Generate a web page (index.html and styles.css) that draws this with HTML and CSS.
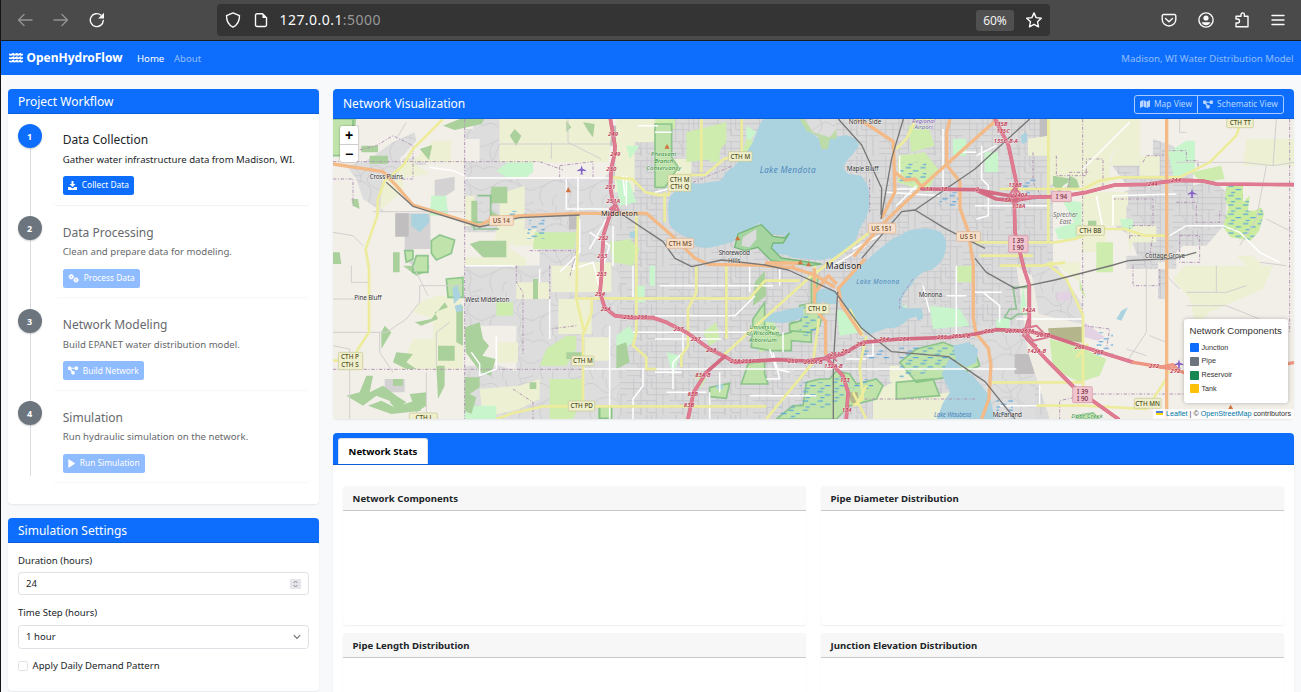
FILE: index.html
```html
<!DOCTYPE html>
<html lang="en">
<head>
<meta charset="utf-8">
<title>OpenHydroFlow</title>
<link rel="stylesheet" href="styles.css">
</head>
<body>
<svg class="defs" width="0" height="0">
  <symbol id="i-nodes" viewBox="0 0 576 512"><path d="M0 80c0-26 22-48 48-48h96c26 0 48 22 48 48v16h192V80c0-26 22-48 48-48h96c26 0 48 22 48 48v96c0 26-22 48-48 48h-96c-26 0-48-22-48-48v-16H192v16l-1 7 73 105h72c26 0 48 22 48 48v96c0 26-22 48-48 48h-96c-26 0-48-22-48-48v-96l1-7-73-105H48c-26 0-48-22-48-48z"/></symbol>
</svg>
<header class="chrome">
  <div class="chrome-nav">
    <svg width="16" height="16" viewBox="0 0 16 16" class="dim"><path d="M15 8H1.500M7 2.500L1.500 8 7 13.500"/></svg>
    <svg width="16" height="16" viewBox="0 0 16 16" class="dim"><path d="M1 8h13.500M9 2.500L14.500 8 9 13.500"/></svg>
    <svg width="16" height="16" viewBox="0 0 16 16"><path d="M14.300 8.500A6.500 6.500 0 1 1 11.800 3"/><path class="solid" d="M15 .8v5.800H9.200z"/></svg>
  </div>
  <div class="urlbar">
    <svg width="16" height="16" viewBox="0 0 16 16"><path d="M8 .9L14.500 3.600C14.500 9 13 13 8 15.200 3 13 1.500 9 1.500 3.600z"/></svg>
    <svg width="14" height="16" viewBox="0 0 14 16"><path d="M3 1.700h5.500l4 4V13a1.500 1.500 0 0 1-1.500 1.500H3A1.500 1.500 0 0 1 1.500 13V3.200A1.500 1.500 0 0 1 3 1.700z"/><path class="solid" d="M8.500 2v4h4z"/></svg>
    <span class="url">127.0.0.1<i>:5000</i></span>
    <span class="zoom">60%</span>
    <svg width="16" height="16" viewBox="0 0 16 16"><path d="M8 .9l2.100 4.700 5.200.6-3.800 3.500 1 5.100L8 12.300l-4.500 2.500 1-5.100L.7 6.200l5.200-.6z"/></svg>
  </div>
  <div class="chrome-tools">
    <svg width="16" height="16" viewBox="0 0 16 16"><path d="M2.500 2.500h11a1.300 1.300 0 0 1 1.300 1.300V7.500a6.800 6.500 0 0 1-13.600 0V3.800a1.300 1.300 0 0 1 1.300-1.300zM4.500 6.500L8 9.800l3.500-3.300"/></svg>
    <svg width="16" height="16" viewBox="0 0 16 16"><circle cx="8" cy="8" r="7.100"/><circle class="solid" cx="8" cy="6" r="2.600"/><path class="solid" d="M3.500 10.300h9c-1 2-2.500 3-4.500 3s-3.500-1-4.500-3z"/></svg>
    <svg width="16" height="16" viewBox="0 0 16 16"><path d="M2 14.800V11h1.500a2 2 0 0 0 0-4H2V4.300h5V2.600a1.700 1.700 0 0 1 3.400 0v1.700H14v10.500z"/></svg>
    <svg width="14" height="16" viewBox="0 0 14 16"><path d="M1 3.500h12M1 8h12M1 12.500h12"/></svg>
  </div>
</header>
<nav class="navbar">
  <svg class="brand-icon" width="14" height="10" viewBox="0 0 14 10"><path d="M0 1.300q1.750 1.200 3.500 0t0 0q1.750 1.200 3.500 0t0 0q1.750 1.200 3.500 0t0 0q1.750 1.200 3.500 0M0 4.700q1.750 1.200 3.500 0t0 0q1.750 1.200 3.500 0t0 0q1.750 1.200 3.500 0t0 0q1.750 1.200 3.500 0M0 8.100q1.750 1.200 3.500 0t0 0q1.750 1.200 3.500 0t0 0q1.750 1.200 3.500 0t0 0q1.750 1.200 3.500 0"/></svg>
  <span class="brand">OpenHydroFlow</span>
  <a class="nav-link active">Home</a><a class="nav-link">About</a>
  <span class="nav-text">Madison, WI Water Distribution Model</span>
</nav>
<main class="layout">
  <aside class="sidebar">
    <section class="card workflow">
      <h5 class="card-header">Project Workflow</h5>
      <ol class="steps">
        <li class="step on"><b class="num">1</b><div class="step-card"><h5>Data Collection</h5><p>Gather water infrastructure data from Madison, WI.</p><button class="btn"><svg width="9" height="9" viewBox="0 0 18 18"><path d="M7 0h4v6h4l-6 6-6-6h4zM0 12h5l4 3 4-3h5v6H0z"/></svg>Collect Data</button></div></li>
        <li class="step"><b class="num">2</b><div class="step-card"><h5>Data Processing</h5><p>Clean and prepare data for modeling.</p><button class="btn"><svg width="11" height="9" viewBox="0 0 22 18"><g class="gear"><circle cx="6.500" cy="5.500" r="3"/><circle cx="16" cy="12" r="3"/></g><g class="teeth"><circle cx="6.500" cy="5.500" r="4.600"/><circle cx="16" cy="12" r="4.600"/></g></svg>Process Data</button></div></li>
        <li class="step"><b class="num">3</b><div class="step-card"><h5>Network Modeling</h5><p>Build EPANET water distribution model.</p><button class="btn"><svg width="10" height="9"><use href="#i-nodes"/></svg>Build Network</button></div></li>
        <li class="step"><b class="num">4</b><div class="step-card"><h5>Simulation</h5><p>Run hydraulic simulation on the network.</p><button class="btn"><svg width="7" height="9" viewBox="0 0 7 9"><path d="M.3 1Q.3 0 1.200.5L6.500 4q.6.500 0 1L1.200 8.500Q.3 9 .3 8z"/></svg>Run Simulation</button></div></li>
      </ol>
    </section>
    <section class="card settings">
      <h5 class="card-header">Simulation Settings</h5>
      <div class="form">
        <label>Duration (hours)</label>
        <div class="control"><span>24</span><svg class="spin" width="11" height="10" viewBox="0 0 11 10"><path d="M3.500 4l2-2 2 2M3.500 6l2 2 2-2"/></svg></div>
        <label>Time Step (hours)</label>
        <div class="control select"><span>1 hour</span><svg width="8" height="8" viewBox="0 0 8 8"><path d="M.8 2.200L4 5.500l3.200-3.300"/></svg></div>
        <div class="check"><i></i>Apply Daily Demand Pattern</div>
      </div>
    </section>
  </aside>
  <div class="content">
    <section class="card viz">
      <div class="card-header viz-header"><h5>Network Visualization</h5>
        <div class="group"><span><svg width="10" height="8" viewBox="0 0 20 16"><path d="M0 3l6-3v13l-6 3zM7 0l6 3v13l-6-3zM14 3l6-3v13l-6 3z"/></svg>Map View</span><span><svg width="10" height="9"><use href="#i-nodes"/></svg>Schematic View</span></div>
      </div>
      <div class="map">
        <svg class="tiles" viewBox="0 0 2883 900">
          <defs>
            <pattern id="st" width="126" height="111" patternUnits="userSpaceOnUse">
              <rect width="126" height="111" fill="#dadadb"/>
              <path d="M0 14h126M0 32h60v18h66M0 68h88v20H0M20 0v68M42 14v97M60 0v50M88 0v111M108 50v61M0 104h42M74 0v32h52M28 68q16 18 14 43M60 68v36h28" fill="none" stroke="#c7c7c9" stroke-width="2.500"/>
            </pattern>
            <pattern id="cur" width="150" height="130" patternUnits="userSpaceOnUse">
              <rect width="150" height="130" fill="#dddddd"/>
              <path d="M0 20q30-18 50 8t48-2 52-6M30 130q-22-40 6-62t58-8 16 48 40 12M0 84q24-12 36-16M70 0q-4 20 8 32t2 30M110 0q14 22-2 40t16 36 26-2M60 130q-6-24 12-32" fill="none" stroke="#cacacd" stroke-width="2.500"/>
            </pattern>
            <pattern id="wet" width="44" height="28" patternUnits="userSpaceOnUse">
              <path d="M2 6h16M24 16h16M10 24h12" stroke="#5aa6dc" stroke-width="3.500"/>
            </pattern>
          </defs>
          <rect width="2883" height="900" fill="#f2efe9"/>

          <!-- built-up areas -->
          <g fill="url(#st)">
            <path d="M1190 0H2160V900H690V640L640 470 690 300 830 160 850 40 1000 0z"/>
            <path d="M2330 130l60-10h70V60l60 20 60 60v60l60-20 40 40v90l-60 70h-70l-50 50h-80l-30-80-60-40-10-60 70-40z"/>
            <path d="M2380 410h150v40h-150zM2505 490v-80h-30v130h30z"/>
          </g>
          <g fill="url(#cur)">
            <path d="M40 140L100 125 180 70 245 40 250 65 200 120 215 160 150 175 150 280 90 240 70 180zM395 128H520V180H850V620H395V440H620V340H395zM420 0H500V130H440V60H395V30H420z"/>
            <path d="M395 740H500L620 780V900H395zM550 440H860V900H620L550 780z"/>
            <path d="M1926 620h180v280H1926zM210 118h70v20h-70zM700 440l130-20v300H700z"/>
          </g>
          <path d="M187 283H292V390H240V440L215 420V350H187zM305 183l60-10v40l-60 40zM155 780h60v40h-60z" fill="#d4d2d2"/>
          <path d="M187 283h40v70h-40zM708 283h28v48h-28zM820 20h38v60h-30zM2045 705h60v60h-60zM2120 0h30v70h-30z" fill="#c0bebe"/>

          <!-- farmland -->
          <g fill="#edf0d3">
            <path d="M150 190L190 170 215 125H240l60-60h55v60h40v5H240l50 35-80 10v40l-70 60zM500 0H840L825 130H500zM395 230h30v90h-30zM500 225l75-25v90l-75 40zM540 330h70v50h-70z"/>
            <path d="M500 285h75v40l-50 60 55 35v20H395v-25h80zM310 530h75v130H300V600l-60-20 20-30zM240 660h150v90H200z"/>
            <path d="M550 490h100v50H550zM655 440h100v80H655zM676 540h100v105H676zM495 670h60v60h-60zM440 810l120-10 60-20 0 60-60 30-110 25zM755 655h75v70h-75zM735 430h100v90H735z"/>
            <path d="M850 0h115v70h-60v150h-60zM965 120h110v60H965zM1620 820l80-40 80 10v40l70-10v80h-230zM1670 740h70v50h-70z"/>
            <path d="M2085 60l60-10V0h200L2330 130v60l-60 30-60-50-60 30V110h-65zM2330 0h40v40l-40 80zM2370 0h50v140h-90l20-60zM2245 220H2385V260H2320V400h-75zM2320 260h60v60h-60zM2740 60h143v80H2730z"/>
            <path d="M2555 440h265l-30 70-160 70-40 40-20-80-50-60zM2420 110h60v60h-60zM2160 430h80v60z"/>
            <path d="M2380 320h90v50h-70l-10 30zM2710 410h50l30 30-40 10z"/>
          </g>
          <path d="M2050 440L2240 560V900H2150L2085 700z" fill="#efece4"/>
          <path d="M2092 440l80 0 75 115v60l-130-30z" fill="url(#cur)"/>

          <!-- parks and grass -->
          <g fill="#c8f5cc">
            <path d="M525 130h75v30l-20 15h-60l-30-20zM295 230h45l5 60h-55zM850 180l40 10 20 60-50 10zM2505 100l55-35 26 0v90l-60 30-8-30zM2185 240l60 10v110h-70l-10-30 60-20zM1790 560l90 10 30 50-110 10zM1860 60h40v50h-40zM880 80h40l-30 40zM905 500h30v50h-30zM395 860h95v40h-95zM2360 300h40v30h-30z"/>
            <path d="M1240 20l30 20-30 40zM1510 570l60 20 20 50-70 10zM950 440h16v60h-16zM1955 100h40v60h-40zM1990 600h40v40h-40zM2070 500l10 60-20 20zM1000 700l40 10-20 60zM850 650l40-30 20 40-60 50zM1700 560h20v20h-20z"/>
          </g>
          <g fill="#cdecae">
            <path d="M605 340h125l-5 50H600zM830 370l60-10 30 30-20 50-60-10zM490 550h50v40h-50zM640 690l60-40h30v40l-30 50h-80zM650 780h100v60l-30 60H650zM1060 40l120-30 0 60-40 50-80 10zM1695 110l80-10 40 50-30 70-90-30zM1725 20h60l20 60-70 20zM2575 160l90-20 10 40-70 10zM2150 660l80 20 90 40 -20 50-60 20-80-40zM2290 370h50v90h-50zM1270 640l40-50 30 50v40l-60 20zM1110 640l40-30 10 50-30 20zM2240 510v-30l20 60z"/>
            <path d="M966 0h60v30h-60zM1240 60l50 10-30 60h-40zM1120 40l40 10v80h-30zM1870 440h50v50h-50zM1090 760l30 20-20 30zM1420 230v-10z"/>
          </g>
          <g fill="#aad09c">
            <path d="M0 0h70l-15 100H10V30H0zM85 80h50v20H85zM110 110h55v24h-55zM260 90l38-12-10 45zM330 20l50-20h75l-10 15-80 18zM475 203h48v50h-50zM415 245h18v80h-18zM475 275l30 20v25h-40zM180 400h20v60h-20zM480 365h40v50h-70l-40-40 30-10zM700 5l15 20-15 15zM750 10l35 5-5 40-15-20zM0 400h20l5 35H0zM545 30l20 20-15 30-20-30zM210 440h80l-10 20-30 10zM55 240l20 0 5 30-20-10z"/>
            <path d="M395 625l45-15 10 50 18 20-20 30 40 10-15 50-30-10-45-60zM245 610l50-10 40-50 10 15-40 15 10 20-50 20zM310 740h25v60l-20 40zM315 680h50v45h-50zM40 830l40-10 20-50 20 0-10 50 40-20 40 30-10 20-50-20-40 30zM105 860l40-15 40 20 60-20 20 30-90 10zM190 700l50 5-20 25 30 20h-30l-40-20zM230 825l50-5 0 40-30 20zM180 780h30v20h-30zM145 640l10-20 20 20-30 50zM370 560h20v120l-20-10zM170 850l20-20 30 20-30 20z"/>
            <path d="M395 775h45v30l-30 20 20 10-15 50-20-10zM795 862h42v38h-42zM700 700h50v20h-50zM590 790h20v20h-20zM600 480h15v60h-15zM850 680l30-10 10 60-40 20z"/>
            <path d="M2160 170l60 10-30 20-10 20-20-20zM2210 170l20 10 10 25-40 10zM2265 305h25v20h-25zM1265 490l30-35 5 75-40 30z"/>
          </g>
          <!-- nature reserves -->
          <g class="reserve">
            <path class="open" d="M433 230h40v80h-50v20h75"/>
            <path d="M295 365l25-17 45 15-10 40-45 20-15-20zM215 395h25l0 25-20 10zM250 410h35v50h-45v-20z"/>
            <path d="M340 480l50-5v60h-45zM0 0h60v110H0M966 15h50v100l20 30-40 60-30 0z"/>
            <path d="M1260 600l35-50 0 80 40 20 40-10v-30l60 0v60l-60-5v30h-60l-60-10z"/>
            <path d="M1400 560l50-10 5-80-20 0v80l40 10-15 60-30 20-60-5v-20l35-10z"/>
            <path d="M1245 735l50-10v40l10 30h-80l10-30z"/><path d="M1130 805l60-12-10 45-50-5z"/>
            <path d="M1420 790l40-10h30l20-25 40 10 20 30 60-15 20 20-20 40-80 20-40 40h-180l50-40 30 0z"/>
            <path d="M1700 730l50-40 80-20 50 20 40-10 20 60-70 30-120 20zM1690 790l110-10 20 50-130 10z"/>
            <path class="open" d="M2040 505h45v80h-30l-20 15-20-5 15-25h20z"/>
            <path d="M1225 900l0 0zM800 862h36v36h-36zM2230 890l50-8 20 18h-70z"/>
          </g>
          <g fill="url(#wet)">
            <path d="M1400 550h60v100h-60zM1400 790h80l40-30 40 40-60 60-100 20zM1700 680l220 0 0 50-220 50zM1580 690h90v30h-90zM2050 190l60-20v80zM590 300h45v60h-55zM520 275h60v24h-60zM1340 860h60v40h-60zM1560 780h60v30h-60z"/>
            <path d="M1700 130h80v60h-80zM1820 220h60v40h-60zM1990 840h50v60h-50zM2290 640h50v70h-50zM2540 50"/>
          </g>
          <g fill="#cbec9f"><path d="M2680 200h50v50l20-20-5 45h20l20-10 8 20-15 50-25 30-60-10-22-30 15-60-10-25z"/></g>
          <path d="M2680 200h50v50l20-20-5 45h20l20-10 8 20-15 50-25 30-60-10-22-30 15-60-10-25z" fill="url(#wet)"/>
          <path d="M2145 628l102-5v48l-97-15zM1545 820h30v40l-20-10z" fill="#b5b58c"/>
          <path d="M2255 610l60 45-20 10-40-10zM2172 520h40v25h-40z" fill="#e3d2e4"/>

          <!-- lakes -->
          <g fill="#aad3df">
            <path d="M1291 0C1272 24 1270 55 1252 82 1240 105 1222 112 1215 130 1205 142 1195 148 1185 155 1165 172 1175 185 1150 187 1120 190 1090 200 1072 190 1050 196 1030 210 1012 232 1002 250 1006 290 1008 312 1020 345 1070 350 1085 378 1110 396 1160 380 1200 368L1240 335 1280 312 1310 345 1350 348 1365 332 1350 352 1320 365 1310 385 1325 403 1360 408 1380 416 1430 420 1460 424 1500 416 1535 395 1565 370 1580 330 1600 295 1610 260 1608 215 1602 195 1585 170 1545 165 1530 145 1545 120 1560 105 1578 80 1570 60 1540 48 1500 55 1460 60 1440 45 1425 0z"/>
            <path d="M1596 428C1640 390 1680 352 1706 348 1730 325 1800 322 1826 343 1842 360 1842 380 1836 400 1830 430 1810 440 1796 453 1770 455 1750 470 1736 498 1715 520 1702 540 1706 560 1725 575 1745 565 1766 568L1771 598 1755 605 1750 592 1726 600C1700 625 1690 628 1660 628L1606 648C1580 620 1550 590 1536 568L1518 518C1525 490 1535 475 1556 458z"/>
            <path d="M1450 515q40-15 60 5l0 35-30 0-10-10-20 25zM1290 610l20-25 60-15 30-5 10-2 2 30-20 10-40 10-60-5-15 10z"/>
            <path d="M1860 680l45-10 30 20-5 40-30 15-30-20zM1850 715l40 35 30 20 50 60 16 70h-175l20-50 20-30-25-55z"/>
            <path d="M235 285l50 0 5 25-30 30-25-20zM358 510l15-15 10 40-20 20zM365 560l20-5 5 20-20 5zM890 340l25-5 0 25-25-5zM2350 600l15-25 20-10-20 40zM2062 50l20-10v30l-15 5zM1150 800l20-5v15h-20zM1926 800q20 30 14 80l-14 20z"/>
          </g>
          <path d="M1400 0h110l0 60-20 0-5 30-20 0-10-40-35-15z" fill="#bddba9"/><path d="M1415 0h95v30l-20 25-50-15z" fill="url(#cur)"/>
          <path class="shore" d="M1205 385l10-40 60-25 10-3 35 35 35 5 15-15-20 30-30 0-5 15 30 30 120 18-30 5-120-15-40-40-40 10z"/>
          <path d="M1230 355l40-25v30l-20 25-25-5z" fill="#dbdbdb"/>

          <!-- administrative limits -->
          <g class="limit">
            <path d="M395 0V900M0 128H620l70 25M0 751H960M70 130v-35l60-15 50-30 60 30v100H150M680 140l100-12v50h-100zM550 440v50l20 30v190M650 440v190l80-10M0 180h60v80M1322 0M2249 0V640M2170 110v60h90v-50h50v90M2340 240h120v80h-70v40M2430 130l10-20h50v-15h70v30h35v30M2530 250h60v60h70v-40M2540 350h60v80h-60zM2390 350h70l-10 60M2870 0V640M2100 100v90l30 50 80-40v-40h60M2750 825h-180l-50 0h-250l-90 20v60M1926 840h-350M1610 180v100M1740 480l-40 60 0 30M1080 190l120-50M2250 620l80 10-10 60M2400 440v60h80v-50M540 810l60 40v50M590 395h140l-20 80"/>
          </g>
          <!-- local roads -->
          <g class="minor">
            <path d="M395 177H835M440 770l50-20V650M395 440h150M290 145l70 10 36 15M440 770v-35l-25-35M735 177v100M620 490v-40M650 540v120M830 620V900M900 440v100h60M750 750H2050M966 220l40-10M966 40h50M980 500h340M900 640h360M1250 440v80M1320 700l20 80M1340 780l-40 0M1660 220l160 10M1680 210h110M1830 30v180M1880 100h50M1926 260h220M1946 80v100l20 20v90l-36 10M1926 520h80M2000 610v-50l-50-40M2250 150l140-140M2050 600h200M2000 860h120v-60M2340 320v-90l190-5M2290 230l20 100M2510 350l50-30h110l50 20 60 60 60 30M820 300l-50 90M840 320v120M910 280v300M700 180v90h130M880 170v90M870 170l5 60M915 20h60M740 390l-20 60 60-20 20 80"/>
            <path d="M740 300v100l-60 60M770 340l60 40-20 60M966 660h200M1000 820h120M1160 760v60M1050 640v60l-30 30v80M1770 500l20 80M1870 440v220M1840 530h60M1990 80l-60 30M1700 170v-60M1690 260l60-60M1640 350l-80 40M1600 380l-100 60M1310 690l20 60 40 10M966 590h240l60-60M1180 440v100h-60M1350 640v60M900 900v-60l30-40v-50M966 760h80M1130 900v-80M1340 440v60M1540 720h60M1620 650v60h-20M1250 830h200"/>
          </g>
          <g class="track">
            <path d="M0 340l60 10 30 30M55 440v50h50M240 440l45 90M190 60l30-50M655 70v50M500 75h340M705 0v70l100 50M500 75l-20 50M310 640v100M0 640h160l60-40 40-50v-50M260 500h130M0 540h120M120 278h270M310 640l40-30M0 680l50 10M50 690v210M50 750h10M140 640v60l40 60M280 760v140M2560 40h-20v-40M2530 130h200l90 10 10-140M2820 140l63-10M2800 140l-30 160-50 80M2800 300l80 40M2440 440v200l-60 90M2450 650l50 20v100M2560 560h120l100 40M2480 450l60 60M2650 440v80M2560 520l120 0 60-20M2780 430l80 10M2380 690l60 20"/>
          </g>
          <!-- secondary roads -->
          <g>
            <path class="sec" d="M330 0L240 90 210 140 155 185 135 240 133 290 98 390 108 450V640L75 690 60 725H0M735 290l-5 250 24 100 22-60V540M750 640V862l-120 0-90 20-50 18M750 862h230l320 0M838 175l60 5 40 40 50 10M966 228h40l20-60h90l60-50h30M1105 0v160M1226 0v110M725 538H1250L1296 485H1400M995 220v90M910 290V640l-10 40 40 35v35h30M1090 440v80l-25 50v110l-20 30 0 35M1180 440v220M1446 440v40M1170 710l260-235 200-150M1300 900l140-170 18-130M1560 860l30-20-10-100 20-90M1590 650l-40-80M1570 860l30-60 0 0M1560 820l40 80M1800 0h-50l-30 60-30 30 0 0"/>
            <path class="sec" d="M2000 210h250l50-25 60-10h180l90-45 80-80 20-60M2146 0v370M1926 370h240l60-10 70-30h80l60 20h70M2000 440h130l30-10M2126 440l70-10M2150 440l50 40 50 110V850M1970 790h276M2110 860h80l60 0 190 10 60-90v-20h10M2230 715l35-40M1940 410h160"/>
          </g>
          <!-- trunk and primary roads -->
          <g class="pri">
            <path d="M0 135L150 158 190 200 240 258 440 320 480 298 560 291 740 283H940L1026 358 1086 418 1126 436 1266 438 1376 446 1446 468 1506 505"/>
            <path d="M1561 413L1666 298 1766 203 1956 33 1995 0M1566 0L1606 18 1681 68 1686 218 1646 298M1686 160L1716 183 1746 180 1766 203M1851 0L1841 40V138L1881 188V268L1906 338 1921 438V598L1931 653M1926 638L1966 688 1974 738 1968 838 1946 900M1444 448V568L1478 608V708M1596 420L1516 508 1526 558 1586 648M2501 0V900M1446 520l40-50 25 25M1380 438v10M1296 432h100"/>
          </g>
          <!-- railways -->
          <path class="rail" d="M160 190L240 262 440 324 560 296 740 288M870 288L990 368 1026 418 1076 443 1166 423 1296 438 1366 453 1506 518 1586 628 1676 698 1846 713 1956 788 2046 900M1516 0L1586 78 1646 208 1644 288M1711 0L1676 118 1644 300M1586 418L1706 278 1746 273 1836 328 1956 388M1746 273L1926 150 2090 0M1514 518L1501 738V900M1926 418L1960 460 2046 508 2166 483 2341 438 2386 425 2526 418 2590 400"/>
          <!-- freeways -->
          <g fill="none" stroke-linecap="round" stroke-linejoin="round">
            <path id="belt" class="mw-case" d="M832 0L846 80 845 105 835 145 832 205 838 240 848 260 830 290 812 345 808 405 806 465 801 520 815 565 845 590 890 596H960L1000 610 1060 640 1130 690 1175 712 1205 730 1330 722 1420 726 1480 718 1530 705 1590 670 1700 660 1850 655 1926 645 1990 632 2080 636 2150 650 2240 680 2320 705 2400 730"/>
            <path class="mw" d="M832 0L846 80 845 105 835 145 832 205 838 240 848 260 830 290 812 345 808 405 806 465 801 520 815 565 845 590 890 596H960L1000 610 1060 640 1130 690 1175 712 1205 730"/>
            <path class="mw-case" d="M1175 712L1120 760 1082 820 1065 900M1480 718L1530 770 1545 820 1540 900M1986 0L2026 78 2050 190 2044 250 2046 340 2074 453 2089 498V618L2081 658 2146 728 2226 808 2356 900"/>
            <path class="mw" d="M1120 760L1082 820 1065 900M1480 718L1530 770 1545 820 1540 900M1986 0L2026 78 2050 190 2044 250 2046 340 2074 453 2089 498V618L2081 658 2146 728 2226 808 2356 900"/>
            <path class="mw-case" d="M1766 210L1926 212 2000 225 2060 235 2180 233 2260 220 2345 198 2440 196 2500 188 2550 184 2610 186 2650 195 2883 197M1926 212L1990 240 2040 245 2100 235"/>
            <path class="mw" d="M2060 235L2180 233 2260 220 2345 198 2440 196 2500 188 2550 184 2610 186 2650 195 2883 197"/>
            <path d="M2070 630l40-10 35 35-45 10zM2025 235l20-30 25 30-25 20zM830 270l18-15 10 20zM2085 600l-15 50 40 30M1460 725l30-20 20 20" stroke="#d8788e" stroke-width="6"/>
            <path d="M2240 680L2320 705 2400 730" class="mw"/>
            <path d="M2400 730L2450 738 2520 750 2600 775M2480 745l40-8 20 20M2840 738l43-7" stroke="#ee9682" stroke-width="10"/>
          </g>

          <!-- place names -->
          <g class="place">
            <text x="160" y="180" textLength="100">Cross Plains</text>
            <text x="859" y="292" class="town" textLength="110">Middleton</text>
            <text x="105" y="544" textLength="82">Pine Bluff</text>
            <text x="463" y="548" textLength="132">West Middleton</text>
            <text x="1596" y="15" textLength="98">North Side</text>
            <text x="1589" y="157" textLength="96">Maple Bluff</text>
            <text x="1204" y="409" textLength="94">Shorewood</text><text x="1204" y="432">Hills</text>
            <text x="1532" y="449" class="city" textLength="108">Madison</text>
            <text x="1792" y="534" textLength="70">Monona</text>
            <text x="2496" y="418" textLength="120">Cottage Grove</text>
            <text x="2023" y="894" textLength="88">McFarland</text>
            <text x="2197" y="293" class="soft">Sprecher</text><text x="2197" y="315" class="soft">East</text>
            <g class="lake"><text x="1364" y="163" class="big" textLength="168">Lake Mendota</text><text x="1634" y="495" textLength="128">Lake Monona</text><text x="1859" y="893" textLength="112">Lake Waubesa</text></g>
            <g class="nature"><text x="992" y="112" textLength="76">Pheasant</text><text x="992" y="133">Branch</text><text x="992" y="154" textLength="104">Conservancy</text><text x="1289" y="629">University</text><text x="1289" y="649" textLength="98">of Wisconsin</text><text x="1289" y="670" textLength="84">Arboretum</text><text x="2262" y="896" textLength="94">Door Creek</text></g>
            <g class="air"><text x="1772" y="12">Regional</text><text x="1772" y="31">Airport</text></g>
          </g>
          <g class="exits">
            <text x="840" y="51">249</text><text x="847" y="111">249</text><text x="835" y="157">250</text><text x="832" y="211">251</text><text x="841" y="251">251A</text><text x="811" y="362">252</text><text x="808" y="417">253</text><text x="806" y="470">253</text><text x="801" y="531">254</text><text x="818" y="575">254</text><text x="886" y="601">255</text><text x="928" y="601">256</text>
            <text x="1037" y="635">257</text><text x="1088" y="667">257</text><text x="1135" y="698">258</text><text x="1207" y="731">258</text><text x="1246" y="731">258A</text><text x="1380" y="732">259</text><text x="1441" y="734">260A·B</text><text x="1506" y="712">261</text><text x="1539" y="702">262</text><text x="1584" y="682">262</text><text x="1653" y="667">264</text><text x="1714" y="667">264</text><text x="1827" y="661">265</text><text x="1884" y="658">265A·B</text><text x="1968" y="642">266</text><text x="2038" y="642">267A</text><text x="2084" y="642">267A</text><text x="2131" y="653">267B</text><text x="2240" y="690">269</text><text x="2297" y="706">269</text><text x="2463" y="748">272</text><text x="2527" y="762">272</text>
            <text x="1110" y="774">83A·B</text><text x="1079" y="830">83B</text><text x="1068" y="865">83B</text><text x="1501" y="746">132A·B</text><text x="1535" y="790">133</text><text x="1541" y="880">134</text><text x="2087" y="580">142A</text><text x="2111" y="702">142A-B</text>
            <text x="2003" y="20">135B</text><text x="2010" y="43">135C</text><text x="2018" y="72">135C-B·A</text><text x="2046" y="203">138B</text><text x="2064" y="235">240A</text><text x="2024" y="250">3A</text><text x="2057" y="268">138A</text><text x="1788" y="215">1A</text><text x="1833" y="215">1B</text><text x="1933" y="217">2</text><text x="2459" y="200">244</text><text x="2529" y="188">244</text>
          </g>
          <!-- route shields -->
          <g class="shield or"><rect x="469" y="290" width="72" height="29"/><text x="505" y="312">US 14</text><rect x="1606" y="313" width="82" height="30"/><text x="1646" y="335">US 151</text><rect x="1871" y="338" width="71" height="29"/><text x="1906" y="360">US 51</text><rect x="1001" y="358" width="81" height="30"/><text x="1041" y="380">CTH MS</text></g>
          <g class="shield ye"><rect x="1186" y="98" width="71" height="29"/><text x="1222" y="120">CTH M</text><rect x="1005" y="167" width="69" height="50"/><text x="1040" y="189">CTH M</text><text x="1040" y="211">CTH Q</text><rect x="716" y="711" width="67" height="29"/><text x="750" y="733">CTH M</text><rect x="706" y="846" width="79" height="30"/><text x="746" y="868">CTH PD</text><rect x="16" y="700" width="73" height="52"/><text x="51" y="721">CTH P</text><text x="51" y="743">CTH S</text><rect x="1418" y="554" width="70" height="30"/><text x="1453" y="577">CTH D</text><rect x="2681" y="-4" width="80" height="30"/><text x="2722" y="18">CTH TT</text><rect x="2230" y="320" width="84" height="29"/><text x="2272" y="342">CTH BB</text><rect x="2404" y="838" width="80" height="30"/><text x="2444" y="861">CTH MN</text><rect x="229" y="882" width="84" height="30"/><text x="271" y="904">CTH J</text></g>
          <g class="shield re"><rect x="2156" y="217" width="59" height="31"/><text x="2186" y="240">I 94</text><rect x="2027" y="350" width="58" height="50"/><text x="2056" y="371">I 39</text><text x="2056" y="393">I 90</text><rect x="2219" y="803" width="59" height="48"/><text x="2249" y="824">I 39</text><text x="2249" y="846">I 90</text></g>
          <g fill="#8461c4"><path id="plane" d="M746 139l3 10 10 5v3l-10-2-1 8 4 4-6-1-6 1 4-4-1-8-10 2v-3l10-5z"/><use href="#plane" x="1831" y="70"/><use href="#plane" x="1792" y="582"/></g>
          <path d="M706 204l8 16h-16zM1002 75l8 14h-16zM1214 350l8 14h-16zM1402 422l8 14h-16zM1427 428l8 14h-16zM2693 857l8 14h-16z" fill="#cf7540"/>
        </svg>
        <div class="zoomctl"><b>+</b><b>−</b></div>
        <div class="legend"><h6>Network Components</h6><p><i class="c-j"></i>Junction</p><p><i class="c-p"></i>Pipe</p><p><i class="c-r"></i>Reservoir</p><p><i class="c-t"></i>Tank</p></div>
        <div class="attrib"><i class="flag"></i><a>Leaflet</a> | © <a>OpenStreetMap</a> contributors</div>
      </div>
    </section>
    <section class="card stats">
      <div class="tabs"><span class="tab">Network Stats</span></div>
      <div class="grid">
        <div class="stat"><h6>Network Components</h6></div>
        <div class="stat"><h6>Pipe Diameter Distribution</h6></div>
        <div class="stat"><h6>Pipe Length Distribution</h6></div>
        <div class="stat"><h6>Junction Elevation Distribution</h6></div>
      </div>
    </section>
  </div>
</main>
</body>
</html>
```
FILE: styles.css
```css
* { box-sizing: border-box; }
body { margin: 0; width: 1301px; height: 692px; overflow: hidden; background: #f8f9fa; font: 9.6px/14.4px "Noto Sans", sans-serif; color: #212529; border-left: 1px solid #151515; }
h5, h6, p, ol { margin: 0; padding: 0; font-weight: 400; }
h5 { font-size: 12px; line-height: 14.4px; }
svg { flex: none; display: block; }
.defs { position: absolute; }

.chrome { height: 41px; background: #4a4a4a; border-bottom: 1px solid #1c1c1e; display: flex; align-items: center; margin-left: -1px; }
.chrome svg { fill: none; stroke: #fbfbfe; stroke-width: 1.4; stroke-linecap: round; stroke-linejoin: round; }
.chrome .dim { stroke: #929292; }
.chrome .solid { fill: #fbfbfe; stroke: none; }
.chrome-nav { display: flex; gap: 20px; width: 217px; padding-left: 17px; }
.urlbar { width: 833px; height: 32px; border-radius: 4px; background: #343434; display: flex; align-items: center; padding: 0 8px; }
.urlbar svg + svg { margin-left: 13px; }
.url { flex: 1; margin-left: 11.500px; font-size: 14px; color: #fbfbfe; letter-spacing: .45px; }
.url i { font-style: normal; color: #999; }
.zoom { width: 38px; height: 21px; border-radius: 3px; background: #505050; color: #f2f2f2; font-size: 12px; line-height: 21px; text-align: center; margin-right: 12px; }
.chrome-tools { display: flex; align-items: center; gap: 20.500px; margin-left: 111px; }

.navbar { height: 34px; background: #0d6efd; display: flex; align-items: center; padding: 0 7.500px; color: #fff; }
.brand-icon { fill: none; stroke: #fff; stroke-width: 1.700; }
.brand { font-size: 12px; font-weight: 700; margin: 0 14.500px 0 4px; }
.nav-link { color: rgba(255,255,255,.55); margin-right: 9.600px; padding-top: 2px; }
.nav-link.active { color: #fff; }
.nav-text { margin-left: auto; color: rgba(255,255,255,.55); padding-top: 2px; }

.layout { display: flex; gap: 14px; padding: 14px 7px 0; height: 617px; overflow: hidden; }
.sidebar { width: 311px; }
.content { width: 961px; }
.card { background: #fff; border-radius: 4px; box-shadow: 0 1px 2px rgba(0,0,0,.075); margin-bottom: 14px; }
.card-header { background: #0d6efd; color: #fff; padding: 5.600px 10px 4px; border-bottom: 1px solid #0b5ed7; border-radius: 4px 4px 0 0; height: 25px; }

.workflow { height: 415px; }
.steps { list-style: none; padding: 9.600px 9.600px 0; position: relative; }
.steps::before { content: ""; position: absolute; left: 22px; top: 10px; width: 1px; height: 352px; background: #dadce2; }
.step { display: flex; gap: 12px; height: 92.600px; position: relative; }
.num { width: 24px; height: 24px; border-radius: 50%; background: #6c757d; color: #fff; text-align: center; line-height: 25px; font-size: 9px; box-shadow: 0 1px 2px rgba(0,0,0,.2); }
.step-card { flex: 1; height: 81px; padding: 9.600px 9.200px; border-radius: 3px; box-shadow: 0 1px 1.500px rgba(0,0,0,.06); }
.step-card p { margin: 5px 0 9.200px; }
.step:not(.on) h5, .step:not(.on) p { color: #66696c; }
.step:not(.on) .step-card { box-shadow: 0 1px 1.500px rgba(0,0,0,.035); }
.step.on .num, .step.on .btn { background: #0d6efd; }
.btn { border: 0; border-radius: 2.500px; background: #8fbbff; color: #fff; font: 8.400px/12.600px "Noto Sans", sans-serif; height: 19px; padding: 0 5.500px; display: flex; align-items: center; gap: 4.500px; }
.btn svg { fill: #fff; }
.gear { fill: none; stroke: #fff; stroke-width: 3; }
.teeth { fill: none; stroke: #fff; stroke-width: 2; stroke-dasharray: 2 2; }
.btn .gear, .btn .teeth { fill: none; }

.settings { height: 173px; }
.form { padding: 11px 10px; }
.form label { display: block; margin-bottom: 4px; }
.control { height: 23px; border: 1px solid #dee2e6; border-radius: 3.500px; display: flex; align-items: center; justify-content: space-between; padding: 1px 7px 0; margin-bottom: 11px; }
.control.select { height: 24px; margin-bottom: 10px; }
.control svg { fill: none; stroke: #6a6f75; stroke-width: 1.100; }
.control .spin { background: #e6e6ea; stroke: #8a8a90; stroke-width: 1; }
.check { display: flex; align-items: center; gap: 5px; }
.check i { width: 9.600px; height: 9.600px; border: 1px solid #dee2e6; border-radius: 2.400px; }

.viz { height: 330px; }
.viz-header { height: 30px; display: flex; align-items: center; justify-content: space-between; }
.group { display: flex; font-size: 8.400px; color: #b9d5ff; }
.group span { display: flex; align-items: center; justify-content: center; gap: 4px; height: 19px; width: 64px; border: 1px solid #a8cbff; border-radius: 3px 0 0 3px; }
.group span + span { width: 87px; margin-left: -1px; border-radius: 0 3px 3px 0; }
.group svg { fill: #b9d5ff; }

.map { height: 300px; position: relative; overflow: hidden; }
.tiles { width: 961px; height: 300px; }
.reserve path { fill: #bfe3ab; stroke: #7dbd80; stroke-width: 5; stroke-opacity: .8; }
.reserve .open { fill: none; }
.shore { fill: #a6d4a0; stroke: #74b77a; stroke-width: 4; }
.limit path { fill: none; stroke: #b396b6; stroke-width: 3; stroke-dasharray: 10 5 3 5; }
.minor path { fill: none; stroke: #fff; stroke-width: 4.500; }
.track path { fill: none; stroke: #d2cfcf; stroke-width: 3; }
.sec { fill: none; stroke: #ecec9c; stroke-width: 8; stroke-linejoin: round; }
.pri path { fill: none; stroke: #f3b987; stroke-width: 10; stroke-linejoin: round; }
.rail { fill: none; stroke: #777; stroke-width: 4; stroke-linejoin: round; }
.mw-case { stroke: #d46b83; stroke-width: 11; }
.mw { stroke: #e07b92; stroke-width: 9; }
.tiles text { font-family: "Noto Sans", sans-serif; text-anchor: middle; paint-order: stroke; stroke-linejoin: round; }
.place { font-size: 19px; fill: #333; stroke: rgba(255,255,255,.5); stroke-width: 3px; }
.place .town { font-size: 22px; fill: #222; }
.place .city { font-size: 26px; fill: #222; }
.place .soft { fill: #6d6d6d; font-style: italic; }
.place .lake { font-style: italic; fill: #5287bd; stroke: none; }
.lake .big { font-size: 25px; }
.nature { font-style: italic; fill: #2c8a2c; font-size: 18px; }
.air { font-style: italic; fill: #7c62b5; font-size: 18px; }
.exits { font-size: 18px; font-weight: 600; font-style: italic; fill: #bd3049; stroke: rgba(255,255,255,.5); stroke-width: 3px; }
.shield { font-size: 19px; font-weight: 500; stroke-width: 2px; }
.shield rect { rx: 3px; }
.shield text { stroke: none; }
.or rect { fill: #f7e0cb; stroke: #dcb08c; }
.or text { fill: #704b25; }
.ye rect { fill: #f0efcd; stroke: #c5c591; }
.ye text { fill: #4e4f1a; }
.re rect { fill: #efc5cf; stroke: #d68f9f; }
.re text { fill: #782b3d; }

.zoomctl { position: absolute; left: 7px; top: 7px; width: 18px; background: #fff; border-radius: 2px; box-shadow: 0 0 2px rgba(0,0,0,.4); }
.zoomctl b { display: block; height: 18px; line-height: 18px; text-align: center; font-size: 14px; font-family: "Liberation Sans", Arial, sans-serif; color: #000; }
.zoomctl b + b { border-top: 1px solid #ccc; }
.legend { position: absolute; left: 851px; top: 200px; width: 104px; height: 84px; padding: 5px 5.500px; background: #fff; border-radius: 3px; box-shadow: 0 0 4px rgba(0,0,0,.25); font: 7.200px/10px "Liberation Sans", Arial, sans-serif; color: #333; }
.legend h6 { font-size: 9.600px; line-height: 14px; margin-bottom: 4.500px; white-space: nowrap; }
.legend p { display: flex; align-items: center; height: 10px; margin-bottom: 3.800px; }
.legend i { width: 9px; height: 9px; border-radius: 1px; margin-right: 3px; }
.c-j { background: #0d6efd; }
.c-p { background: #6c757d; }
.c-r { background: #198754; }
.c-t { background: #ffc107; }
.attrib { position: absolute; right: 0; bottom: 0; height: 10px; padding: 0 3px; background: rgba(255,255,255,.8); font: 7.200px/10px "Liberation Sans", Arial, sans-serif; color: #333; white-space: nowrap; }
.attrib a { color: #0078a8; }
.flag { display: inline-block; width: 7px; height: 4px; margin-right: 3px; vertical-align: 1px; background: linear-gradient(#4c7be1 50%, #ffd500 50%); }

.stats { height: 300px; }
.tabs { height: 32px; background: #0d6efd; border-bottom: 1px solid #0b5ed7; border-radius: 4px 4px 0 0; padding: 5px 5px 0; display: flex; }
.tab { width: 90px; height: 26px; background: #fff; border: 1px solid #dee2e6; border-bottom: 0; border-radius: 3px 3px 0 0; text-align: center; font-weight: 700; color: #000; line-height: 25px; }
.grid { display: grid; grid-template-columns: 463px 463px; column-gap: 15px; row-gap: 8px; padding: 21px 10px 0; }
.stat { height: 139px; border-radius: 3px; box-shadow: 0 1px 2px rgba(0,0,0,.07); }
.stat h6 { height: 25px; font-size: 9.600px; line-height: 25px; font-weight: 700; padding: 0 9.600px; background: #f7f7f7; border-bottom: 1px solid #c8c8c8; border-radius: 3px 3px 0 0; }
```
